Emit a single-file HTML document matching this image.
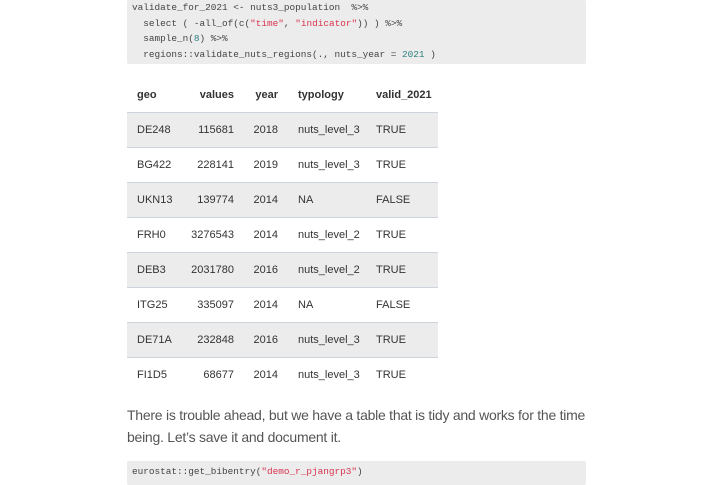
<!DOCTYPE html>
<html><head><style>
body{margin:0;width:720px;height:480px;background:#fff;overflow:hidden;position:relative;font-family:"Liberation Sans",sans-serif;}
.code{position:absolute;left:127px;width:459px;background:#ececec;border-radius:2px;font-family:"Liberation Mono",monospace;font-size:9.4px;color:#444;box-sizing:border-box;padding-left:5px;}
.code div{height:15.5px;line-height:15.5px;white-space:pre;}
.s{color:#d8344f}.n{color:#2a7f7f}
table{position:absolute;left:127px;top:78px;width:311px;border-collapse:collapse;font-size:11px;color:#333;}
th{font-weight:bold;height:34px;text-align:left;padding:0;border-bottom:1px solid #cdd3da;}
td{height:34px;padding:0;border-bottom:1px solid #cdd3da;}
tr.g td{background:#ececec;}
.r{text-align:right}
p{position:absolute;left:127px;top:404px;margin:0;width:480px;font-size:14px;line-height:22px;color:#555;letter-spacing:-0.25px;}
</style></head><body>
<div class="code" style="top:0;height:64px;padding-top:0">
<div>validate_for_2021 &lt;- nuts3_population  %&gt;%</div>
<div>  select ( -all_of(c(<span class="s">"time"</span>, <span class="s">"indicator"</span>)) ) %&gt;%</div>
<div>  sample_n(<span class="n">8</span>) %&gt;%</div>
<div>  regions::validate_nuts_regions(., nuts_year = <span class="n">2021</span> )</div>
</div>
<table>
<colgroup><col style="width:58px"><col style="width:49px"><col style="width:64px"><col style="width:78px"><col style="width:62px"></colgroup>
<tr><th style="padding-left:10px">geo</th><th class="r">values</th><th class="r" style="padding-right:20px">year</th><th>typology</th><th>valid_2021</th></tr>
<tr class="g"><td style="padding-left:10px">DE248</td><td class="r">115681</td><td class="r" style="padding-right:20px">2018</td><td>nuts_level_3</td><td>TRUE</td></tr>
<tr><td style="padding-left:10px">BG422</td><td class="r">228141</td><td class="r" style="padding-right:20px">2019</td><td>nuts_level_3</td><td>TRUE</td></tr>
<tr class="g"><td style="padding-left:10px">UKN13</td><td class="r">139774</td><td class="r" style="padding-right:20px">2014</td><td>NA</td><td>FALSE</td></tr>
<tr><td style="padding-left:10px">FRH0</td><td class="r">3276543</td><td class="r" style="padding-right:20px">2014</td><td>nuts_level_2</td><td>TRUE</td></tr>
<tr class="g"><td style="padding-left:10px">DEB3</td><td class="r">2031780</td><td class="r" style="padding-right:20px">2016</td><td>nuts_level_2</td><td>TRUE</td></tr>
<tr><td style="padding-left:10px">ITG25</td><td class="r">335097</td><td class="r" style="padding-right:20px">2014</td><td>NA</td><td>FALSE</td></tr>
<tr class="g"><td style="padding-left:10px">DE71A</td><td class="r">232848</td><td class="r" style="padding-right:20px">2016</td><td>nuts_level_3</td><td>TRUE</td></tr>
<tr><td style="padding-left:10px;border-bottom:none">FI1D5</td><td class="r" style="border-bottom:none">68677</td><td class="r" style="padding-right:20px;border-bottom:none">2014</td><td style="border-bottom:none">nuts_level_3</td><td style="border-bottom:none">TRUE</td></tr>
</table>
<p>There is trouble ahead, but we have a table that is tidy and works for the time<br>being. Let’s save it and document it.</p>
<div class="code" style="top:461px;height:24px;padding-top:3px">
<div>eurostat::get_bibentry(<span class="s">"demo_r_pjangrp3"</span>)</div>
</div>
</body></html>
